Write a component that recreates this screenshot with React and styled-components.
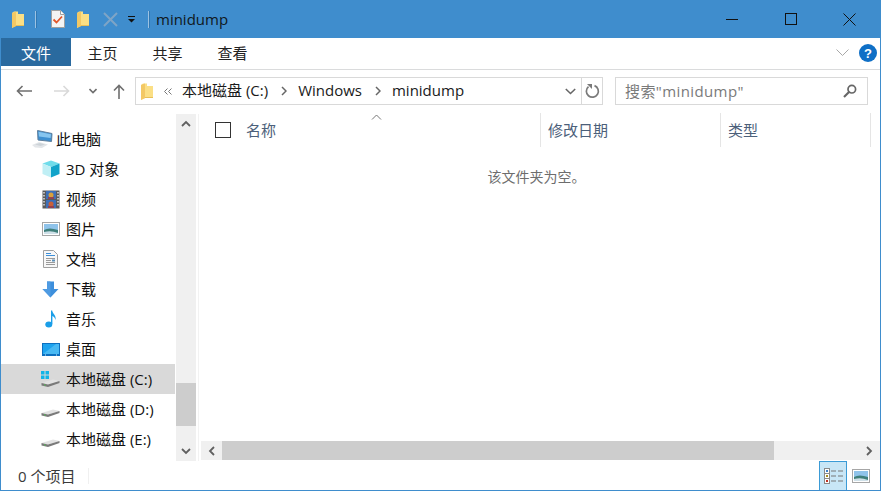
import React from "react";
import styled, { createGlobalStyle } from "styled-components";

const Global = createGlobalStyle`
  html, body { margin: 0; padding: 0; background: #fff; overflow: hidden; }
  * { box-sizing: border-box; }
`;
const FONT = `"Open Sans", "Noto Sans CJK SC", sans-serif`;

const Window = styled.div`
  width: 881px; height: 491px; display: flex; flex-direction: column;
  border: 1px solid #3f8dcd; border-top: 0; background: #fff;
  font-family: ${FONT}; font-size: 15px; color: #111; overflow: hidden;
`;
const TitleBar = styled.div`
  height: 38px; flex: none; margin: 0 -1px; background: #3f8dcd;
  display: flex; align-items: center; padding-left: 12px;
`;
const TitleSep = styled.span`
  width: 1px; height: 17px; background: #9cc2e2; border-right: 1px solid #2f78b4; box-sizing: content-box;
  margin: 0 ${p => p.$r}px 0 ${p => p.$l}px;
`;
const TitleText = styled.span`font-size: 15px; color: #101820;`;
const QuickIcon = styled.svg`display: block; flex: none; margin-right: ${p => p.$r || 0}px;`;
const WinButtons = styled.div`margin-left: auto; display: flex; height: 100%; padding-right: 2px;`;
const WinButton = styled.div`
  width: 59px; display: flex; align-items: center; justify-content: center;
`;
const Tabs = styled.div`
  height: 32px; flex: none; display: flex; border-bottom: 1px solid #dadbdc; position: relative;
  padding-bottom: 3px; align-items: stretch;
`;
const FileTab = styled.div`
  width: 70px; background: #2a6a9f; color: #fff; display: flex; align-items: center; justify-content: center; margin-right: -1px;
`;
const Tab = styled.div`
  width: 65px; display: flex; align-items: center; justify-content: center; color: #222;
`;
const TabRight = styled.div`
  margin-left: auto; display: flex; align-items: center; gap: 10px; padding-right: 3px; padding-top: 1px;
`;
const AddressRow = styled.div`
  height: 43px; flex: none; display: flex; align-items: flex-start; padding-top: 7px;
`;
const NavButtons = styled.div`
  width: 134px; height: 28px; flex: none; display: flex; align-items: center; padding-left: 15px;
`;
const AddressBox = styled.div`
  width: 468px; height: 28px; flex: none; border: 1px solid #d9d9d9; display: flex; align-items: center;
`;
const FolderSlot = styled.div`margin-left: 5px; margin-right: 11px; display: flex;`;
const Crumb = styled.span`color: #1a1a1a; padding-bottom: 3px; margin-right: ${p => p.$r}px;`;
const Chev = styled.svg`display: block; flex: none; margin-right: ${p => p.$r || 0}px; margin-left: ${p => p.$l || 0}px;`;
const AddressEnd = styled.div`
  margin-left: auto; display: flex; align-items: center; height: 100%;
`;
const RefreshCell = styled.div`
  width: 21px; height: 100%; border-left: 1px solid #d9d9d9; display: flex; align-items: center; justify-content: center;
`;
const SearchBox = styled.div`
  width: 253px; height: 28px; margin-left: 12px; flex: none; border: 1px solid #d9d9d9;
  display: flex; align-items: center; padding: 0 10px 0 9px; color: #7a7a7a; justify-content: space-between;
`;
const SearchText = styled.span`letter-spacing: 0.4px; padding-bottom: 2px;`;
const Body = styled.div`flex: 1; min-height: 0; display: flex;`;
const Nav = styled.div`width: 174px; flex: none; padding-top: 11px; display: flex; flex-direction: column;`;
const NavRow = styled.div`
  height: 30px; flex: none; display: flex; align-items: center;
  padding-left: ${p => p.$top ? 31 : 40}px; gap: ${p => p.$top ? 3 : 6}px;
  background: ${p => p.$sel ? "#d9d9d9" : "transparent"}; color: #111;
`;
const NavLabel = styled.span`padding-bottom: 1px;`;
const IconSlot = styled.div`width: ${p => p.$w || 19}px; height: 19px; display: flex; align-items: center; justify-content: center; flex: none;`;
const VScroll = styled.div`
  width: 20px; margin: 1px 0 0 1px; background: #f0f0f0; display: flex; flex-direction: column;
`;
const ScrollBtn = styled.div`
  height: ${p => p.$h}px; flex: none; display: flex; align-items: center; justify-content: center;
`;
const VTrack = styled.div`flex: 1; padding-top: 250px;`;
const VThumb = styled.div`height: 43px; background: #cdcdcd;`;
const Divider = styled.div`width: 1px; margin: 1px 2px 0 2px; background: #f2f2f2;`;
const Main = styled.div`flex: 1; min-width: 0; display: flex; flex-direction: column;`;
const Header = styled.div`height: 34px; display: flex; flex: none; margin-left: -2px; position: relative;`;
const CheckCell = styled.div`width: 47px; padding: 9px 0 0 16px; flex: none;`;
const CheckBoxSq = styled.div`width: 16px; height: 16px; border: 1px solid #333;`;
const SortArrow = styled.svg`position: absolute; left: 172px; top: 1px;`;
const ColHead = styled.div`
  width: ${p => p.$w}px; flex: none; height: 34px; display: flex; align-items: center; padding: 0 0 2px ${p => p.$pl}px;
  color: #4c607a; border-right: 1px solid #e5e5e5;
`;
const Empty = styled.div`
  flex: 1; text-align: center; padding-top: 20px; color: #6d6d6d; font-size: 14px; line-height: 20px; margin-left: -8px;
`;
const HScroll = styled.div`height: 19px; flex: none; display: flex; background: #f0f0f0; margin-bottom: 1px;`;
const HBtn = styled.div`width: 21px; flex: none; display: flex; align-items: center; justify-content: center;`;
const HTrack = styled.div`flex: 1; display: flex;`;
const HThumb = styled.div`width: 552px; background: #cdcdcd;`;
const StatusBar = styled.div`height: 29px; flex: none; display: flex; align-items: center; padding-left: 17px; position: relative; color: #3a3a3a;`;
const StatusSep = styled.span`width: 1px; height: 16px; background: #f0f0f0; margin-left: 13px;`;
const ViewButtons = styled.div`margin-left: auto; display: flex; height: 100%; margin-right: 5px;`;
const ViewButton = styled.div`
  width: 28px; height: 100%; display: flex; align-items: center; justify-content: center;
  ${p => p.$on ? "background:#c8e6f6;border:1px solid #3b9bd6;border-bottom:0;" : ""}
`;

const Folder = ({ w = 12, h = 17 }) => (
  <svg width={w} height={h} viewBox="0 0 12 17" style={{ display: "block" }}>
    <path d="M0 2 L2 0.5 H6 V3 H12 V15 H3 L0 17Z" fill="#fbdf85" />
    <path d="M0 2 L4 0.5 V15.2 L0 17Z" fill="#f3c864" />
    <path d="M4 14.5 H12" stroke="#e8bf58" strokeWidth="1" />
  </svg>
);
const Check = () => (
  <svg width="14" height="18" viewBox="0 0 14 18">
    <path d="M.5.5H9.5L13.5 4.5V17.5H.5Z" fill="#f4f4f4" stroke="#a0a0a0" />
    <path d="M9.5.5V4.5H13.5" fill="#fff" stroke="#a0a0a0" />
    <path d="M2.5 9.5 L5.5 12.5 L11 6.5" fill="none" stroke="#e2562a" strokeWidth="1.8" />
  </svg>
);
const Stroke = ({ w, h, d, c = "#666", sw = 1.6, ml, mr }) => (
  <Chev width={w} height={h} viewBox={`0 0 ${w} ${h}`} $l={ml} $r={mr}>
    <path d={d} fill="none" stroke={c} strokeWidth={sw} />
  </Chev>
);

const PC = () => (
  <svg width="21" height="19" viewBox="0 0 21 19">
    <path d="M5.5 .5 L20 3.5 L19.5 11.5 L6 10Z" fill="#3d8fd0" stroke="#5f7f9c" strokeWidth="1" />
    <path d="M6.5 1.8 L19 4.3 L18.6 8 L7 6.5Z" fill="#86c5ef" />
    <path d="M0 15 L7 12 L16 14.5 L10 18 L3 17.5Z" fill="#e3e6e9" />
    <path d="M3 14.5 L8 13 L13 14.5 L8.5 16Z" fill="#cdd3d8" />
  </svg>
);
const Cube = () => (
  <svg width="18" height="18" viewBox="0 0 18 18">
    <path d="M9 0.5 L17.5 3.5 L9 7 L.5 3.5Z" fill="#6fdcea" />
    <path d="M.5 3.5 L9 7 V17.5 L.5 14Z" fill="#c0eff5" />
    <path d="M9 7 L17.5 3.5 V14 L9 17.5Z" fill="#11a3c9" />
  </svg>
);
const Film = () => (
  <svg width="18" height="19" viewBox="0 0 18 19">
    <rect x=".5" y=".5" width="17" height="18" fill="#5a5a5a" />
    <rect x="4" y="1" width="10" height="8" fill="#3d6fb8" />
    <rect x="4" y="10" width="10" height="8" fill="#3d6fb8" />
    <circle cx="9" cy="5" r="2.5" fill="#d9a03a" /><circle cx="9" cy="14" r="2.5" fill="#c9603a" />
    <path d="M6 8h6M6 17h6" stroke="#a33" strokeWidth="1.4" />
    <path d="M2 2v15M16 2v15" stroke="#e8e8e8" strokeWidth="1.4" strokeDasharray="1.5 1.5" />
  </svg>
);
const Pic = ({ w = 18, h = 14 }) => (
  <svg width={w} height={h} viewBox="0 0 18 14">
    <rect x=".5" y=".5" width="17" height="13" fill="#fff" stroke="#a6a6a6" />
    <rect x="2" y="2" width="14" height="10" fill="#8fc3ea" />
    <path d="M2 8 Q7 5 16 8 V12 H2Z" fill="#3f7f7a" />
    <path d="M2 10 Q9 8 16 11 V12 H2Z" fill="#cfe0e8" />
  </svg>
);
const Doc = () => (
  <svg width="15" height="18" viewBox="0 0 15 18">
    <path d="M.5.5H10.5L14.5 4.5V17.5H.5Z" fill="#f7f7f7" stroke="#a0a0a0" />
    <path d="M3 3.5h5" stroke="#3d8fd8" strokeWidth="1" /><path d="M3 5.5h9" stroke="#3d8fd8" />
    <path d="M3 8.5h9M3 10.5h5M3 12.5h9M3 14.5h9" stroke="#9a9a9a" />
    <rect x="9" y="9.5" width="3" height="2" fill="#5a8fb8" />
  </svg>
);
const Down = () => (
  <svg width="17" height="17" viewBox="0 0 17 17">
    <path d="M5 0.5H12V8H16.5L8.5 16.5L0.5 8H5Z" fill="#3d8fdc" />
    <path d="M5 0.5H8.5V16.5L0.5 8H5Z" fill="#4f9be2" />
  </svg>
);
const Note = () => (
  <svg width="12" height="18" viewBox="0 0 12 18">
    <ellipse cx="3.8" cy="14.5" rx="3.5" ry="3" fill="#1a9ee8" />
    <path d="M6 14V0.5H7.2C7.6 4 11.5 5 10.5 10C10 7.5 8.5 6.5 7.4 6V14Z" fill="#1a9ee8" />
  </svg>
);
const Desk = () => (
  <svg width="18" height="13" viewBox="0 0 18 13">
    <rect width="18" height="13" fill="#0d70c0" />
    <rect x="1" y="1" width="16" height="10" fill="#1ea3ee" />
    <path d="M1 11 L14 1 H17 V11Z" fill="#49b9f3" />
    <path d="M3 12h1M14 12h1" stroke="#cfe8f8" />
  </svg>
);
const Drive = ({ win }) => (
  <svg width="19" height="17" viewBox="0 0 19 17">
    {win && (
      <g fill="#12b4e8">
        <rect x="0" y="0" width="3.5" height="3.5" /><rect x="4.5" y="0" width="3.5" height="3.5" />
        <rect x="0" y="4.5" width="3.5" height="3.5" /><rect x="4.5" y="4.5" width="3.5" height="3.5" />
      </g>
    )}
    <path d="M0.5 12 L12 8.5 L18.5 10 L7 13.5Z" fill="#e2e2e2" />
    <path d="M0.5 12 L7 13.5 L18.5 10 V12 L7 16 L0.5 14.5Z" fill="#7a7a7a" />
    <path d="M3 14h1.5" stroke="#4ec44e" strokeWidth="1" />
  </svg>
);

const navItems = [
  { icon: <Cube />, text: "3D 对象" },
  { icon: <Film />, text: "视频" },
  { icon: <Pic />, text: "图片" },
  { icon: <Doc />, text: "文档" },
  { icon: <Down />, text: "下载" },
  { icon: <Note />, text: "音乐" },
  { icon: <Desk />, text: "桌面" },
  { icon: <Drive win />, text: "本地磁盘 (C:)", sel: true },
  { icon: <Drive />, text: "本地磁盘 (D:)" },
  { icon: <Drive />, text: "本地磁盘 (E:)" },
];

export default function App() {
  return (
    <>
      <Global />
      <Window>
        <TitleBar>
          <Folder />
          <TitleSep $l={11} $r={14} />
          <QuickIcon as="div" $r={12} style={{ display: "flex" }}><Check /></QuickIcon>
          <Folder />
          <QuickIcon width="15" height="15" viewBox="0 0 15 15" style={{ marginLeft: 14, marginRight: 10 }}>
            <path d="M1 1L14 14M14 1L1 14" stroke="#7ea4c6" strokeWidth="2" />
          </QuickIcon>
          <QuickIcon width="7" height="7" viewBox="0 0 7 7" $r={13}>
            <path d="M0 .5H7" stroke="#111" /><path d="M0 3H7L3.5 6.5Z" fill="#111" />
          </QuickIcon>
          <TitleSep $l={0} $r={6} />
          <TitleText>minidump</TitleText>
          <WinButtons>
            <WinButton>
              <svg width="12" height="12" viewBox="0 0 12 12"><path d="M0 6.5H12" stroke="#111" /></svg>
            </WinButton>
            <WinButton>
              <svg width="12" height="12" viewBox="0 0 12 12"><rect x=".5" y=".5" width="11" height="11" fill="none" stroke="#111" /></svg>
            </WinButton>
            <WinButton>
              <svg width="13" height="13" viewBox="0 0 13 13"><path d="M.5.5L12.5 12.5M12.5.5L.5 12.5" stroke="#111" /></svg>
            </WinButton>
          </WinButtons>
        </TitleBar>
        <Tabs>
          <FileTab>文件</FileTab>
          <Tab>主页</Tab>
          <Tab>共享</Tab>
          <Tab>查看</Tab>
          <TabRight>
            <Stroke w={13} h={8} d="M.5.5L6.5 6.5L12.5.5" c="#a8a8a8" sw={1} />
            <svg width="18" height="18" viewBox="0 0 18 18">
              <circle cx="9" cy="9" r="9" fill="#0f6fc6" />
              <text x="9" y="14" textAnchor="middle" fontSize="13" fontWeight="700" fill="#fff" fontFamily="Liberation Sans">?</text>
            </svg>
          </TabRight>
        </Tabs>
        <AddressRow>
          <NavButtons>
            <Stroke w={16} h={12} d="M16 6H1.5M6.5 1L1.5 6L6.5 11" c="#6f6f6f" sw={1.6} mr={22} />
            <Stroke w={16} h={12} d="M0 6H14.5M9.5 1L14.5 6L9.5 11" c="#d9d9d9" sw={1.6} mr={19} />
            <Stroke w={8} h={6} d="M.5 1L4 4.5L7.5 1" c="#6f6f6f" sw={1.6} mr={16} />
            <Stroke w={12} h={15} d="M6 15V1.5M1 6.5L6 1.5L11 6.5" c="#6f6f6f" sw={1.6} />
          </NavButtons>
          <AddressBox>
            <FolderSlot><Folder /></FolderSlot>
            <Stroke w={8} h={7} d="M3.5.5L.5 3.5L3.5 6.5M7.5.5L4.5 3.5L7.5 6.5" c="#777" sw={1} mr={10} />
            <Crumb $r={13}>本地磁盘 (C:)</Crumb>
            <Stroke w={6} h={10} d="M1 1L5 5L1 9" c="#666" sw={1.5} mr={11} />
            <Crumb $r={13}>Windows</Crumb>
            <Stroke w={6} h={10} d="M1 1L5 5L1 9" c="#666" sw={1.5} mr={11} />
            <Crumb $r={0}>minidump</Crumb>
            <AddressEnd>
              <Stroke w={11} h={7} d="M.8 1L5.5 5.5L10.2 1" c="#666" sw={1.6} mr={5} />
              <RefreshCell>
                <svg width="15" height="16" viewBox="0 0 15 16">
                  <path d="M9.5 2.6A6 6 0 1 1 3.5 3.6" fill="none" stroke="#7a7a7a" strokeWidth="1.7" />
                  <path d="M2 1H7V6Z" fill="#7a7a7a" />
                </svg>
              </RefreshCell>
            </AddressEnd>
          </AddressBox>
          <SearchBox>
            <SearchText>搜索"minidump"</SearchText>
            <svg width="14" height="14" viewBox="0 0 14 14">
              <circle cx="8.8" cy="5.2" r="3.8" fill="none" stroke="#666" strokeWidth="1.7" />
              <path d="M6 8L1 13" stroke="#666" strokeWidth="2.2" />
            </svg>
          </SearchBox>
        </AddressRow>
        <Body>
          <Nav>
            <NavRow $top>
              <IconSlot $w={21}><PC /></IconSlot>
              <NavLabel>此电脑</NavLabel>
            </NavRow>
            {navItems.map(i => (
              <NavRow key={i.text} $sel={i.sel}>
                <IconSlot>{i.icon}</IconSlot>
                <NavLabel>{i.text}</NavLabel>
              </NavRow>
            ))}
          </Nav>
          <VScroll>
            <ScrollBtn $h={19}><Stroke w={10} h={7} d="M1 6L5 2L9 6" c="#606060" sw={1.8} /></ScrollBtn>
            <VTrack><VThumb /></VTrack>
            <ScrollBtn $h={20}><Stroke w={10} h={7} d="M1 1L5 5L9 1" c="#606060" sw={1.8} /></ScrollBtn>
          </VScroll>
          <Divider />
          <Main>
            <Header>
              <CheckCell><CheckBoxSq /></CheckCell>
              <ColHead $w={295} $pl={0}>名称</ColHead>
              <ColHead $w={180} $pl={7}>修改日期</ColHead>
              <ColHead $w={150} $pl={7}>类型</ColHead>
              <SortArrow width="11" height="6" viewBox="0 0 11 6"><path d="M1 5.5L5.5 1L10 5.5" fill="none" stroke="#777" /></SortArrow>
            </Header>
            <Empty>该文件夹为空。</Empty>
            <HScroll>
              <HBtn><Stroke w={7} h={10} d="M6 1L2 5L6 9" c="#606060" sw={1.8} /></HBtn>
              <HTrack><HThumb /></HTrack>
              <HBtn><Stroke w={7} h={10} d="M1 1L5 5L1 9" c="#606060" sw={1.8} /></HBtn>
            </HScroll>
          </Main>
        </Body>
        <StatusBar>
          <span>0 个项目</span>
          <StatusSep />
          <ViewButtons>
            <ViewButton $on>
              <svg width="19" height="16" viewBox="0 0 19 16">
                <rect x=".5" y=".5" width="5" height="15" fill="#fff" stroke="#8a8a8a" />
                <path d="M1 5.5h4M1 10.5h4" stroke="#8a8a8a" />
                <rect x="2" y="2" width="2" height="2" fill="#3d7fc8" /><rect x="2" y="7" width="2" height="2" fill="#a89020" /><rect x="2" y="12" width="2" height="2" fill="#c03020" />
                <path d="M7 3h5M14 3h5M7 8h5M14 8h5M7 13h5M14 13h5" stroke="#777" />
              </svg>
            </ViewButton>
            <ViewButton><Pic /></ViewButton>
          </ViewButtons>
        </StatusBar>
      </Window>
    </>
  );
}
